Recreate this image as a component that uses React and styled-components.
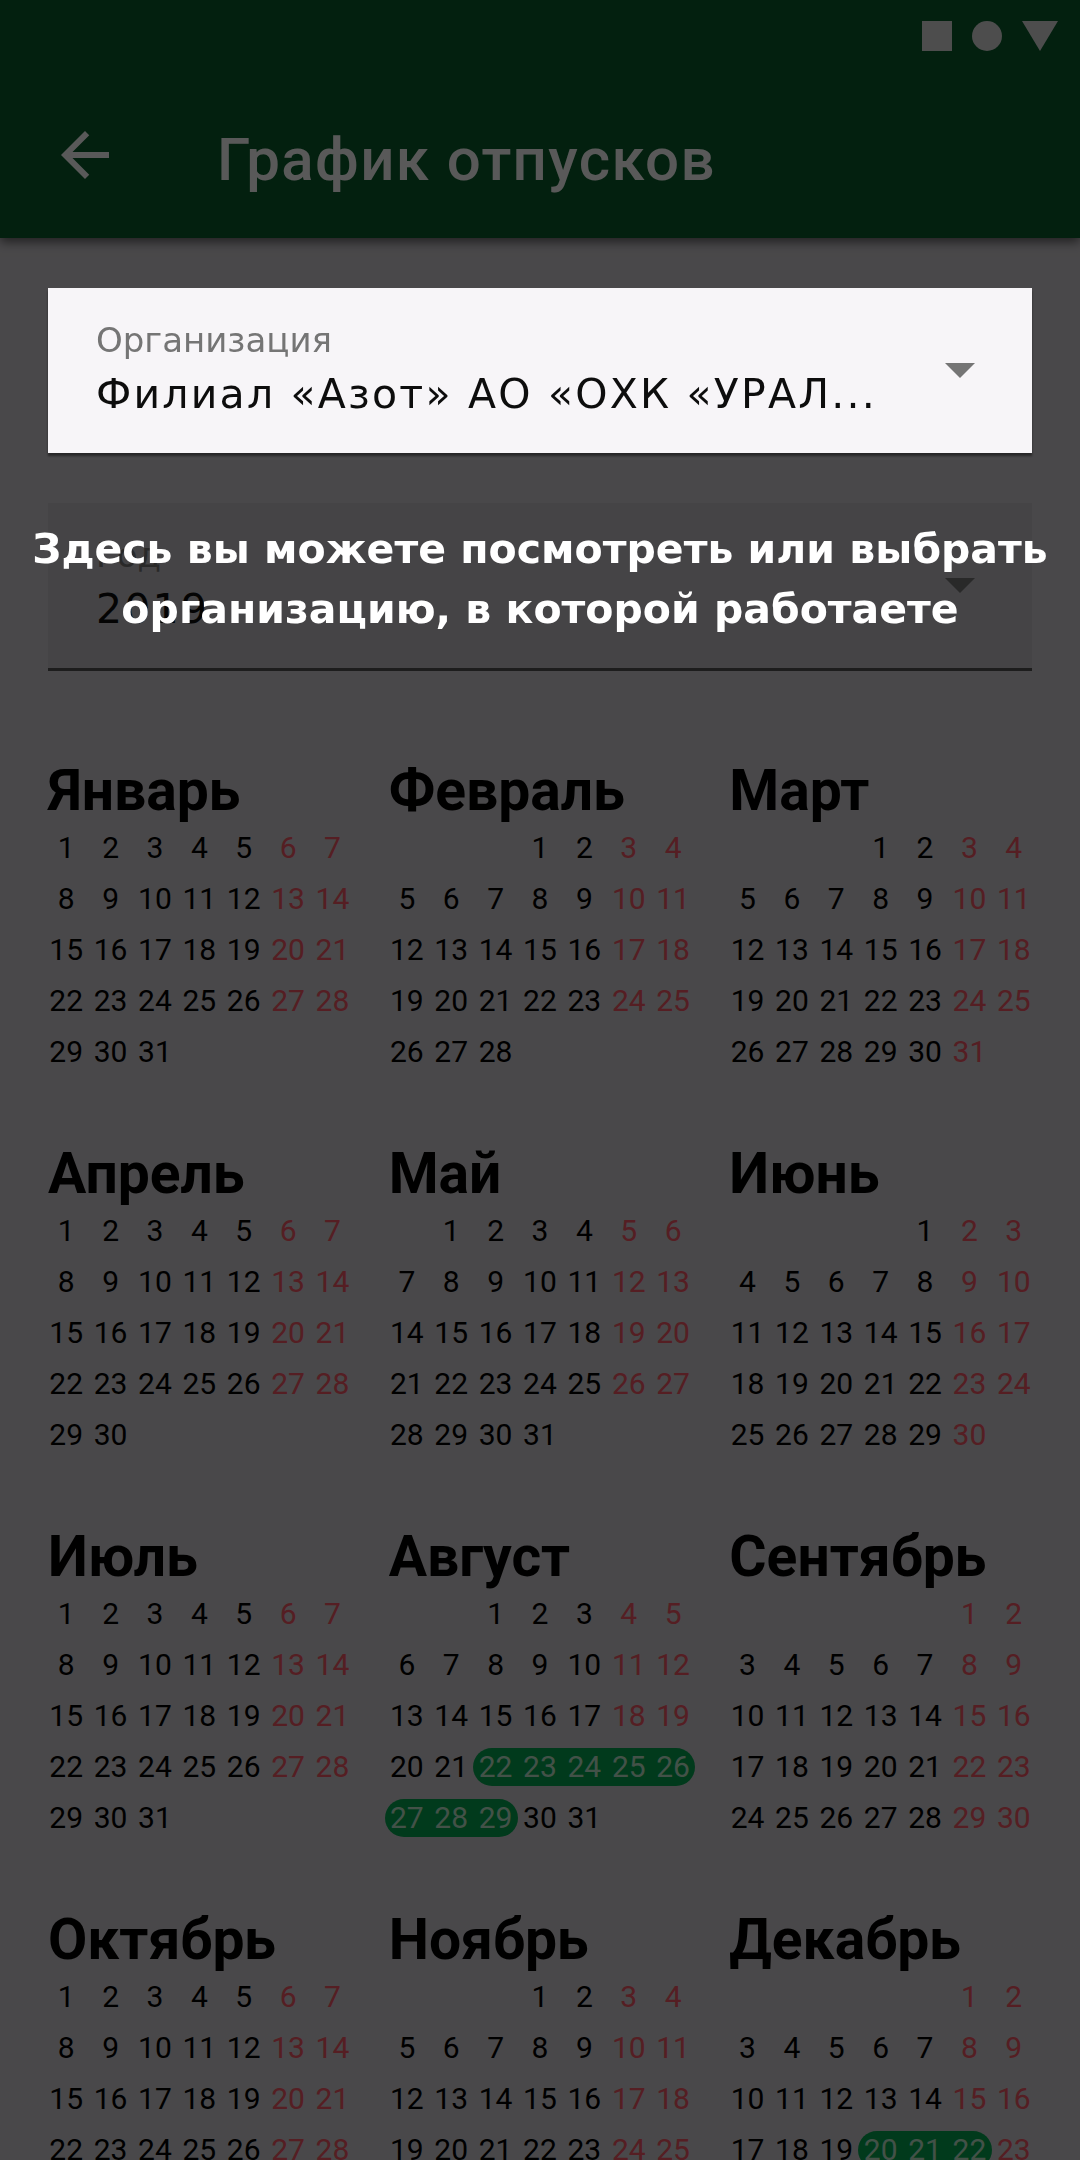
import React from "react";
import styled, { createGlobalStyle } from "styled-components";

const GlobalStyle = createGlobalStyle`
  html, body {
    margin: 0;
    padding: 0;
    overflow: hidden;
    background: #d1ced3;
  }
  body {
    font-family: Roboto, "Noto Sans", sans-serif;
  }
  * { box-sizing: border-box; }
`;

const Screen = styled.div`
  width: 1080px;
  min-height: 2160px;
  background: #d1ced3;
`;

const AppBar = styled.header`
  position: relative;
  z-index: 1;
  background: #0a5c2b;
  box-shadow: 0 4px 10px rgba(0, 0, 0, 0.55);
`;

const StatusBar = styled.div`
  height: 72px;
  display: flex;
  align-items: center;
  justify-content: flex-end;
  padding-right: 22px;
  gap: 20px;
`;

const StatusSquare = styled.span`
  width: 30px;
  height: 30px;
  background: #dcdcdc;
`;

const StatusCircle = styled.span`
  width: 30px;
  height: 30px;
  border-radius: 50%;
  background: #dcdcdc;
`;

const Toolbar = styled.div`
  height: 166px;
  display: flex;
  align-items: center;
  padding-left: 49px;
`;

const BackButton = styled.span`
  display: flex;
  width: 72px;
  height: 72px;
  color: #ffffff;
`;

const Title = styled.h1`
  margin: 8px 0 0 96px;
  font-family: Roboto, sans-serif;
  font-weight: 500;
  font-size: 60px;
  letter-spacing: 1.4px;
  color: #ffffff;
`;

const Fields = styled.div`
  display: flex;
  flex-direction: column;
  gap: 50px;
  padding: 50px 48px 0;
`;

const Field = styled.div`
  display: flex;
  align-items: center;
  height: ${(p) => (p.$spot ? "165px" : "168px")};
  padding: 0 57px 0 48px;
  background: ${(p) => (p.$spot ? "#f7f5f8" : "#c5c2c8")};
  border-bottom: ${(p) => (p.$spot ? "none" : "3px solid #555555")};
  ${(p) =>
    p.$spot &&
    `
    position: relative;
    z-index: 20;
    box-shadow: 0 3px 2px rgba(0, 0, 0, 0.45);
  `}
`;

const FieldText = styled.div`
  flex: 1;
  align-self: flex-start;
  display: flex;
  flex-direction: column;
  padding-top: 32px;
  min-width: 0;
`;

const FieldLabel = styled.span`
  font-family: "DejaVu Sans", sans-serif;
  font-size: 34px;
  line-height: 40px;
  color: #757575;
`;

const FieldValue = styled.span`
  margin-top: 9px;
  font-family: "DejaVu Sans", sans-serif;
  font-size: 41px;
  line-height: 50px;
  letter-spacing: 2.2px;
  color: #0d0d0d;
  white-space: nowrap;
`;

const DropArrow = styled.svg`
  flex: none;
  width: 30px;
  height: 15px;
  fill: #757575;
`;

const Calendar = styled.div`
  display: grid;
  grid-template-columns: repeat(3, 1fr);
  column-gap: 30px;
  row-gap: 69px;
  padding: 92px 44px 0;
`;

const Month = styled.section`
  display: flex;
  flex-direction: column;
`;

const MonthTitle = styled.h2`
  margin: 0 0 3px 4px;
  font-family: Roboto, sans-serif;
  font-weight: 700;
  font-size: 57px;
  line-height: 56px;
  color: #000000;
`;

const Days = styled.div`
  display: grid;
  grid-template-columns: repeat(7, 1fr);
  grid-auto-rows: 51px;
`;

const Blank = styled.span``;

const Day = styled.span`
  align-self: center;
  height: 38px;
  line-height: 38px;
  text-align: center;
  font-family: Roboto, sans-serif;
  font-size: 30px;
  color: ${(p) => (p.$inRange ? "#bfe9cf" : p.$weekend ? "#f35664" : "#000000")};
  background: ${(p) => (p.$inRange ? "#03a650" : "transparent")};
  border-top-left-radius: ${(p) => (p.$start ? "19px" : "0")};
  border-bottom-left-radius: ${(p) => (p.$start ? "19px" : "0")};
  border-top-right-radius: ${(p) => (p.$end ? "19px" : "0")};
  border-bottom-right-radius: ${(p) => (p.$end ? "19px" : "0")};
`;

const Overlay = styled.div`
  position: fixed;
  inset: 0;
  z-index: 10;
  background: rgba(0, 0, 0, 0.65);
  padding-top: 519px;
`;

const CoachText = styled.p`
  margin: 0;
  font-family: "DejaVu Sans", sans-serif;
  font-weight: 700;
  font-size: 41px;
  line-height: 60px;
  color: #ffffff;
  text-align: center;
  white-space: nowrap;
`;

const months = [
  { name: "Январь", start: 0, days: 31 },
  { name: "Февраль", start: 3, days: 28 },
  { name: "Март", start: 3, days: 31 },
  { name: "Апрель", start: 0, days: 30 },
  { name: "Май", start: 1, days: 31 },
  { name: "Июнь", start: 4, days: 30 },
  { name: "Июль", start: 0, days: 31 },
  { name: "Август", start: 2, days: 31, range: [22, 29] },
  { name: "Сентябрь", start: 5, days: 30 },
  { name: "Октябрь", start: 0, days: 31 },
  { name: "Ноябрь", start: 3, days: 30 },
  { name: "Декабрь", start: 5, days: 31, range: [20, 22] },
];

function MonthView({ m }) {
  const cells = [];
  for (let i = 0; i < m.start; i++) cells.push(<Blank key={"b" + i} />);
  for (let d = 1; d <= m.days; d++) {
    const col = (m.start + d - 1) % 7;
    const inRange = !!m.range && d >= m.range[0] && d <= m.range[1];
    cells.push(
      <Day
        key={d}
        $weekend={col >= 5}
        $inRange={inRange}
        $start={inRange && (d === m.range[0] || col === 0)}
        $end={inRange && (d === m.range[1] || col === 6)}
      >
        {d}
      </Day>
    );
  }
  return (
    <Month>
      <MonthTitle>{m.name}</MonthTitle>
      <Days>{cells}</Days>
    </Month>
  );
}

function Arrow() {
  return (
    <DropArrow viewBox="0 0 30 15">
      <polygon points="0,0 30,0 15,15" />
    </DropArrow>
  );
}

export default function App() {
  return (
    <Screen>
      <GlobalStyle />
      <AppBar>
        <StatusBar>
          <StatusSquare />
          <StatusCircle />
          <svg width="36" height="30" viewBox="0 0 36 30">
            <polygon points="0,0 36,0 18,30" fill="#dcdcdc" />
          </svg>
        </StatusBar>
        <Toolbar>
          <BackButton>
            <svg width="72" height="72" viewBox="0 0 24 24" fill="currentColor">
              <path d="M20 11H7.83l5.59-5.59L12 4l-8 8 8 8 1.41-1.41L7.83 13H20v-2z" />
            </svg>
          </BackButton>
          <Title>График отпусков</Title>
        </Toolbar>
      </AppBar>

      <Fields>
        <Field $spot>
          <FieldText>
            <FieldLabel>Организация</FieldLabel>
            <FieldValue>Филиал «Азот» АО «ОХК «УРАЛ...</FieldValue>
          </FieldText>
          <Arrow />
        </Field>
        <Field>
          <FieldText>
            <FieldLabel>Год</FieldLabel>
            <FieldValue>2019</FieldValue>
          </FieldText>
          <Arrow />
        </Field>
      </Fields>

      <Calendar>
        {months.map((m) => (
          <MonthView key={m.name} m={m} />
        ))}
      </Calendar>

      <Overlay>
        <CoachText>
          Здесь вы можете посмотреть или выбрать
          <br />
          организацию, в которой работаете
        </CoachText>
      </Overlay>
    </Screen>
  );
}
